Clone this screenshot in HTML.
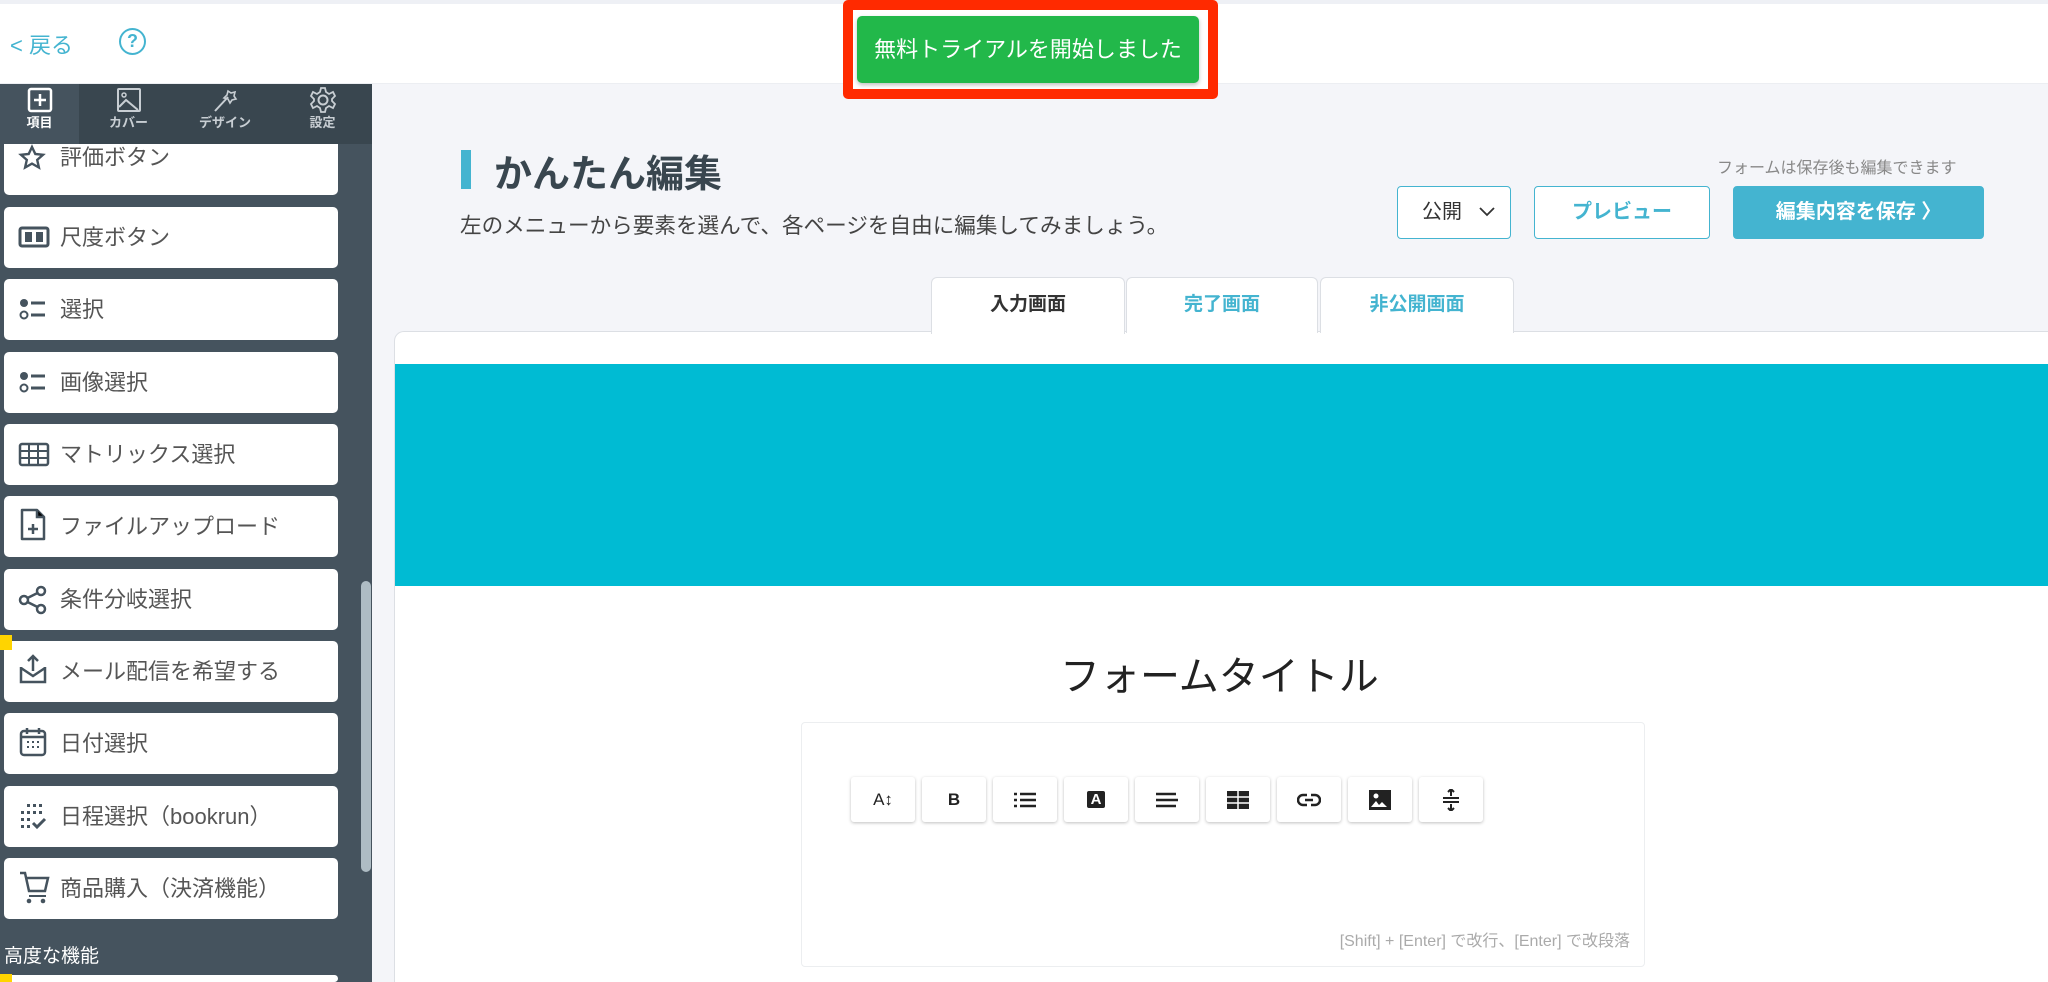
<!DOCTYPE html>
<html><head><meta charset="utf-8"><style>
*{box-sizing:border-box;margin:0;padding:0}
html,body{width:2048px;height:982px;overflow:hidden}
body{background:#f4f5f9;font-family:"Liberation Sans","Noto Sans CJK JP",sans-serif;position:relative;color:#333}
.top{position:absolute;left:0;top:0;width:2048px;height:84px;background:#fff;border-top:4px solid #eef0f5;border-bottom:1px solid #eceef2}
.back{position:absolute;left:10px;top:28px;font-size:22px;color:#44b4d0}
.help{position:absolute;left:119px;top:28px;width:27px;height:27px;border:2.5px solid #44b4d0;border-radius:50%;color:#44b4d0;font-size:18px;font-weight:bold;text-align:center;line-height:22px}
.red{position:absolute;left:843px;top:0;width:375px;height:99px;border:10px solid #ff2a00;border-radius:5px;background:#fff}
.green{position:absolute;left:857px;top:16px;width:342px;height:67px;background:#22b84a;border-radius:5px;color:#fff;font-size:22px;text-align:center;line-height:67px;box-shadow:0 2px 4px rgba(0,0,0,.25)}
.side{position:absolute;left:0;top:84px;width:372px;height:898px;background:#45535e;overflow:hidden}
.tabs{position:absolute;left:0;top:0;width:372px;height:60px;background:#39464f;z-index:2}
.tab{position:absolute;top:0;height:60px;text-align:center;color:#c8ced3;font-size:13px;font-weight:bold;line-height:16px}
.tab svg{display:block;margin:3px auto 2px}
.item{position:absolute;left:4px;width:334px;height:61px;background:#fff;border-radius:5px;font-size:22px;color:#555;line-height:61px;padding-left:56px;overflow:hidden}
.item svg{position:absolute;left:14px;top:16px}
.scroll{position:absolute;left:361px;top:497px;width:10px;height:291px;background:#aebcc4;border-radius:5px}
.h1bar{position:absolute;left:461px;top:150px;width:10px;height:39px;background:#44b4d0}
.h1{position:absolute;left:494px;top:143px;font-size:38px;font-weight:bold;color:#39464f}
.sub{position:absolute;left:460px;top:209px;font-size:21.6px;color:#444}
.note{position:absolute;left:1717px;top:154px;font-size:16px;color:#888}
.btn{position:absolute;top:186px;height:53px;border:1.5px solid #44b4d0;border-radius:4px;background:#fff;text-align:center;line-height:50px;font-size:20px}
.mtab{position:absolute;top:277px;height:56px;border:1.5px solid #dcdfe4;border-bottom:none;border-radius:6px 6px 0 0;background:#fff;text-align:center;line-height:54px;font-size:19px;font-weight:bold;color:#44b4d0}
.panel{position:absolute;left:394px;top:331px;width:1654px;height:651px;background:#fff;border:1.5px solid #dcdfe4;border-bottom:none;border-right:none;border-radius:10px 0 0 0}
.banner{position:absolute;left:395px;top:364px;width:1653px;height:222px;background:#00bbd3}
.editor{position:absolute;left:801px;top:722px;width:844px;height:245px;border:1.5px solid #eceef0;border-radius:4px;background:#fff}
.tb{position:absolute;top:777px;width:64px;height:45px;background:#fff;border-radius:3px;box-shadow:0 1px 3px rgba(0,0,0,.25);display:flex;align-items:center;justify-content:center;font-weight:bold;font-size:17px;color:#222}
.hint{position:absolute;left:1250px;top:927px;width:380px;text-align:right;font-size:16px;color:#aaa}
</style></head><body>
<div class="top"></div>
<div class="back">&lt; 戻る</div>
<div class="help">?</div>
<div class="red"></div>
<div class="green">無料トライアルを開始しました</div>

<div class="side">
 <div class="tabs">
  <div class="tab" style="left:0;width:79px;background:#45535e;color:#fff"><svg width="26" height="26" viewBox="0 0 26 26"><rect x="2" y="2" width="22" height="22" rx="2" fill="none" stroke="#fff" stroke-width="2.5"/><path d="M13 7v12M7 13h12" stroke="#fff" stroke-width="2.5"/></svg>項目</div>
  <div class="tab" style="left:90px;width:77px"><svg width="26" height="26" viewBox="0 0 26 26"><rect x="2" y="2" width="22" height="22" rx="1" fill="none" stroke="#c8ced3" stroke-width="2"/><circle cx="8" cy="8" r="2" fill="none" stroke="#c8ced3" stroke-width="1.5"/><path d="M3 20l7-7 12 10" fill="none" stroke="#c8ced3" stroke-width="2"/></svg>カバー</div>
  <div class="tab" style="left:185px;width:80px"><svg width="26" height="26" viewBox="0 0 26 26"><path d="M3 24L16 10" stroke="#c8ced3" stroke-width="2"/><path d="M16 4l3 2 4-1-1 4 2 3-4 1-2 3-2-4-4-1 3-3z" fill="none" stroke="#c8ced3" stroke-width="1.6"/></svg>デザイン</div>
  <div class="tab" style="left:290px;width:65px"><svg width="28" height="28" viewBox="0 0 28 28" style="margin:2px auto 1px"><circle cx="14" cy="14" r="4.5" fill="none" stroke="#c8ced3" stroke-width="2"/><path d="M12 2h4l1 4 3 2 4-2 2 4-3 3v2l3 3-2 4-4-2-3 2-1 4h-4l-1-4-3-2-4 2-2-4 3-3v-2l-3-3 2-4 4 2 3-2z" fill="none" stroke="#c8ced3" stroke-width="1.8"/></svg>設定</div>
 </div>
 <div class="item" style="top:50px;line-height:48px"><svg width="28" height="28" viewBox="0 0 28 28" style="top:10px"><path d="M14 3l3.3 7 7.7.8-5.8 5.1 1.7 7.6L14 19.6 7.1 23.5l1.7-7.6L3 10.8l7.7-.8z" fill="none" stroke="#45535e" stroke-width="2.4"/></svg>評価ボタン</div>
 <div class="item" style="top:123px"><svg width="32" height="28" viewBox="0 0 32 28"><rect x="2" y="5" width="28" height="18" rx="2" fill="none" stroke="#45535e" stroke-width="3"/><rect x="7" y="9" width="7" height="10" fill="#45535e"/><rect x="18" y="9" width="7" height="10" fill="#45535e"/></svg>尺度ボタン</div>
 <div class="item" style="top:195px"><svg width="30" height="28" viewBox="0 0 30 28"><circle cx="6" cy="8" r="4" fill="#45535e"/><circle cx="6" cy="20" r="3.5" fill="none" stroke="#45535e" stroke-width="2"/><path d="M13 8h14M13 20h14" stroke="#45535e" stroke-width="3"/></svg>選択</div>
 <div class="item" style="top:268px"><svg width="30" height="28" viewBox="0 0 30 28"><circle cx="6" cy="8" r="4" fill="#45535e"/><circle cx="6" cy="20" r="3.5" fill="none" stroke="#45535e" stroke-width="2"/><path d="M13 8h14M13 20h14" stroke="#45535e" stroke-width="3"/></svg>画像選択</div>
 <div class="item" style="top:340px"><svg width="32" height="28" viewBox="0 0 32 28"><rect x="2" y="4" width="28" height="21" rx="2" fill="none" stroke="#45535e" stroke-width="2.5"/><path d="M2 11h28M2 18h28M11 4v21M20 4v21" stroke="#45535e" stroke-width="2"/></svg>マトリックス選択</div>
 <div class="item" style="top:412px"><svg width="30" height="34" viewBox="0 0 30 34" style="top:12px"><path d="M4 2h15l7 7v22H4z" fill="none" stroke="#45535e" stroke-width="2.5" stroke-linejoin="round"/><path d="M19 2v7h7M15 16v10M10 21h10" stroke="#45535e" stroke-width="2.5"/></svg>ファイルアップロード</div>
 <div class="item" style="top:485px"><svg width="30" height="30" viewBox="0 0 30 30"><circle cx="6" cy="15" r="4" fill="none" stroke="#45535e" stroke-width="2.5"/><circle cx="23" cy="6" r="4" fill="none" stroke="#45535e" stroke-width="2.5"/><circle cx="23" cy="24" r="4" fill="none" stroke="#45535e" stroke-width="2.5"/><path d="M9.5 13l10-5M9.5 17l10 5" stroke="#45535e" stroke-width="2.5"/></svg>条件分岐選択</div>
 <div class="item" style="top:557px"><svg width="30" height="32" viewBox="0 0 30 32" style="top:12px"><path d="M3 14v15h24V14M3 15l12 8 12-8M15 18V3M10 8l5-5 5 5" fill="none" stroke="#45535e" stroke-width="2.5"/></svg>メール配信を希望する</div>
 <div class="item" style="top:629px"><svg width="30" height="32" viewBox="0 0 30 32" style="top:13px"><rect x="3" y="5" width="24" height="24" rx="3" fill="none" stroke="#45535e" stroke-width="2.5"/><path d="M3 11h24M9 2v6M21 2v6" stroke="#45535e" stroke-width="2.5"/><path d="M9 16h2M14 16h2M19 16h2M9 21h2M14 21h2M19 21h2" stroke="#45535e" stroke-width="2"/></svg>日付選択</div>
 <div class="item" style="top:702px"><svg width="30" height="30" viewBox="0 0 30 30"><g fill="#45535e"><rect x="9" y="2" width="3" height="3"/><rect x="15" y="2" width="3" height="3"/><rect x="21" y="2" width="3" height="3"/><rect x="3" y="9" width="3" height="3"/><rect x="9" y="9" width="3" height="3"/><rect x="15" y="9" width="3" height="3"/><rect x="21" y="9" width="3" height="3"/><rect x="3" y="16" width="3" height="3"/><rect x="9" y="16" width="3" height="3"/><rect x="3" y="23" width="3" height="3"/><rect x="9" y="23" width="3" height="3"/></g><path d="M15 21l4 4 8-8" fill="none" stroke="#45535e" stroke-width="3"/></svg>日程選択（bookrun）</div>
 <div class="item" style="top:774px"><svg width="32" height="34" viewBox="0 0 32 34" style="top:12px"><path d="M2 3h5l4 18h16l3-13H9" fill="none" stroke="#45535e" stroke-width="2.5"/><path d="M11 26h17" stroke="#45535e" stroke-width="2"/><circle cx="11" cy="31" r="2.3" fill="#45535e"/><circle cx="25" cy="31" r="2.3" fill="#45535e"/></svg>商品購入（決済機能）</div>
 <div style="position:absolute;left:4px;top:857px;color:#fff;font-size:19px">高度な機能</div>
 <div class="item" style="top:891px;height:7px"></div>
 <div style="position:absolute;left:0;top:551px;width:12px;height:15px;background:#ffd400"></div>
 <div style="position:absolute;left:0;top:890px;width:12px;height:8px;background:#ffd400"></div>
 <div class="scroll"></div>
</div>

<div class="h1bar"></div>
<div class="h1">かんたん編集</div>
<div class="sub">左のメニューから要素を選んで、各ページを自由に編集してみましょう。</div>
<div class="note">フォームは保存後も編集できます</div>
<div class="btn" style="left:1397px;width:114px;color:#333;text-align:left;padding-left:24px">公開<svg width="18" height="12" viewBox="0 0 18 12" style="position:absolute;right:14px;top:19px"><path d="M2 2l7 7 7-7" fill="none" stroke="#333" stroke-width="1.8"/></svg></div>
<div class="btn" style="left:1534px;width:176px;color:#44b4d0;font-weight:bold">プレビュー</div>
<div class="btn" style="left:1733px;width:251px;background:#44b4d0;color:#fff;font-weight:bold">編集内容を保存 〉</div>

<div class="panel"></div>
<div class="mtab" style="left:931px;width:194px;color:#333;height:57px">入力画面</div>
<div class="mtab" style="left:1126px;width:192px">完了画面</div>
<div class="mtab" style="left:1320px;width:194px">非公開画面</div>
<div class="banner"></div>
<div style="position:absolute;left:1060px;top:652px;font-size:40px;color:#222;line-height:50px">フォームタイトル</div>
<div class="editor"></div>
<div class="tb" style="left:851px;font-weight:normal">A↕</div>
<div class="tb" style="left:922px">B</div>
<div class="tb" style="left:993px"><svg width="22" height="16" viewBox="0 0 22 16"><path d="M0 2h3M0 8h3M0 14h3M6 2h16M6 8h16M6 14h16" stroke="#222" stroke-width="2.5"/></svg></div>
<div class="tb" style="left:1064px"><span style="background:#222;color:#fff;padding:0 4px;font-size:15px;border-radius:2px">A</span></div>
<div class="tb" style="left:1135px"><svg width="22" height="16" viewBox="0 0 22 16"><path d="M0 2h20M0 8h22M0 14h20" stroke="#222" stroke-width="2.5"/></svg></div>
<div class="tb" style="left:1206px"><svg width="22" height="18" viewBox="0 0 22 18"><rect width="22" height="18" fill="#222"/><path d="M0 6h22M0 12h22M11 0v18" stroke="#fff" stroke-width="1.5"/></svg></div>
<div class="tb" style="left:1277px"><svg width="24" height="14" viewBox="0 0 24 14"><path d="M10 2H6a5 5 0 000 10h4M14 2h4a5 5 0 010 10h-4M8 7h8" fill="none" stroke="#222" stroke-width="2.5"/></svg></div>
<div class="tb" style="left:1348px"><svg width="22" height="20" viewBox="0 0 22 20"><rect width="22" height="20" fill="#222"/><circle cx="7" cy="6" r="2.5" fill="#fff"/><path d="M2 17l5-6 3 4 3-3 5 5z" fill="#fff"/></svg></div>
<div class="tb" style="left:1419px"><svg width="16" height="22" viewBox="0 0 16 22"><path d="M0 9h16M0 13h16M8 0v7M5 3l3-3 3 3M8 22v-7M5 19l3 3 3-3" fill="none" stroke="#222" stroke-width="2"/></svg></div>
<div class="hint">[Shift] + [Enter] で改行、[Enter] で改段落</div>
</body></html>
